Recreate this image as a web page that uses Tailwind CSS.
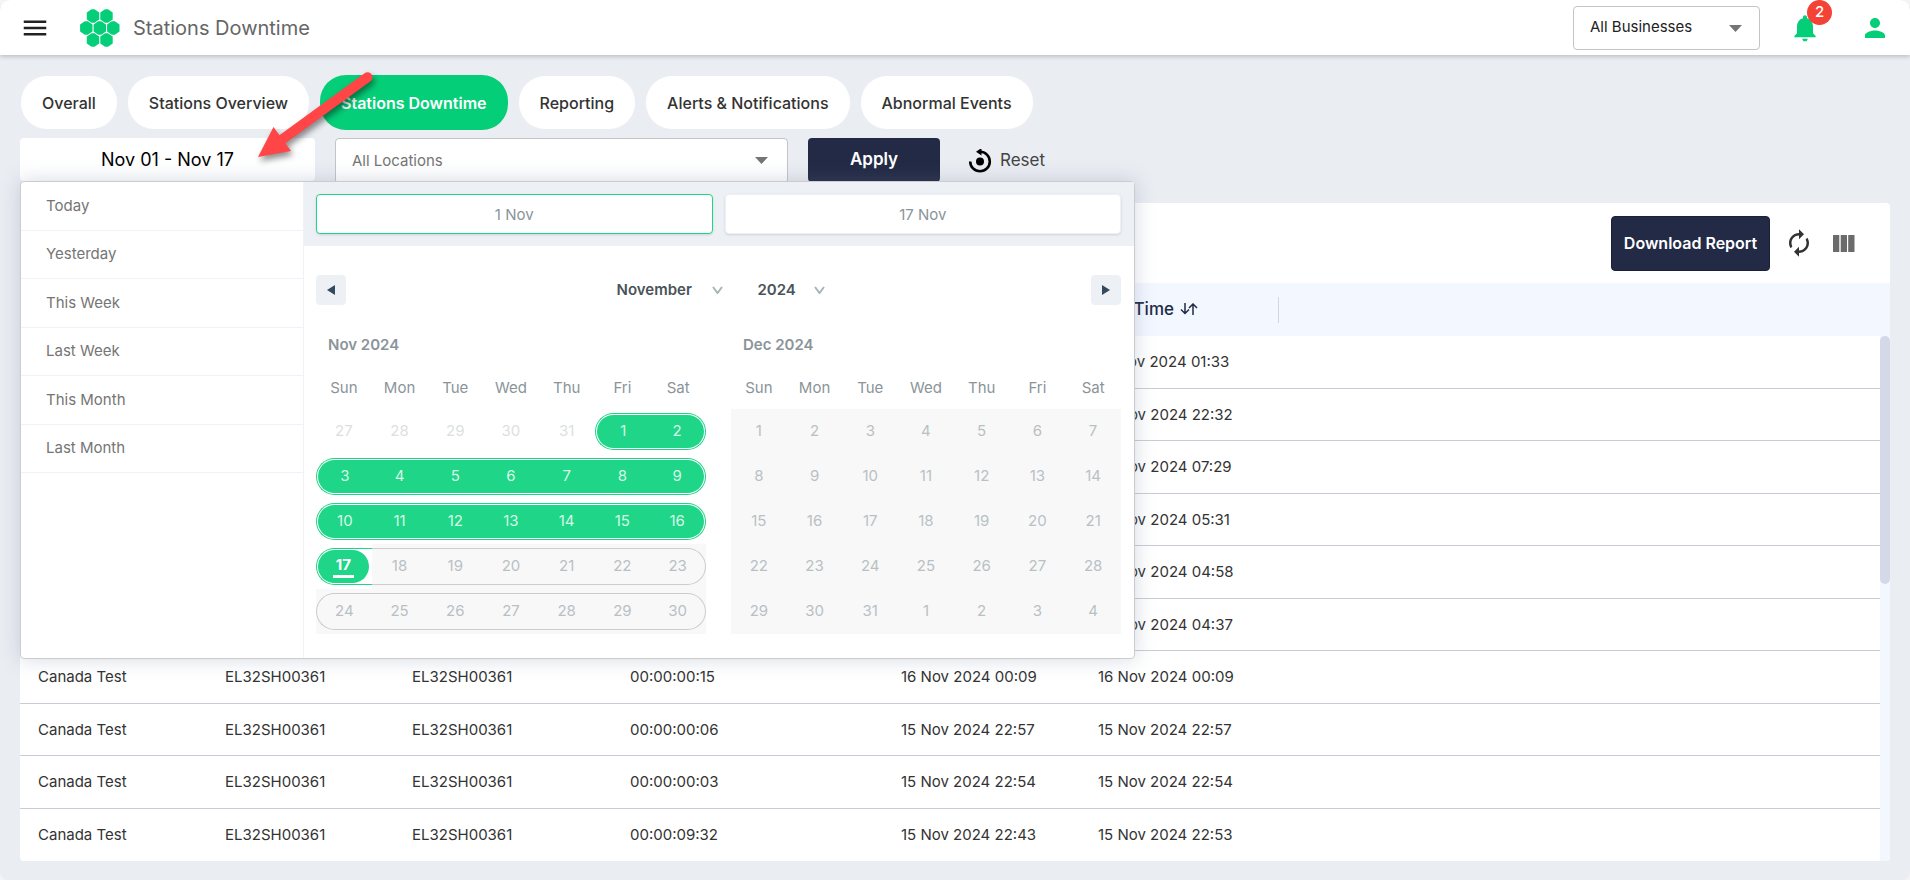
<!DOCTYPE html>
<html lang="en">
<head>
    <meta charset="UTF-8">
    <meta name="viewport" content="width=device-width, initial-scale=1.0">
    <title>Stations Downtime</title>
    <script src="https://cdn.jsdelivr.net/npm/@tailwindcss/browser@4"></script>
</head>
<body class="bg-[#f4f4f4] font-['Inter',sans-serif] text-[#333]">
    <div class="relative min-h-screen rounded-[10px] bg-[#eaedf2] pb-5 overflow-hidden">

        <!-- Top bar -->
        <header class="relative flex h-[55px] items-center bg-white pl-5 pr-5 shadow-[0_2px_4px_rgba(0,0,0,0.18)]">
            <button aria-label="Menu" class="text-[#222]">
                <svg class="size-[30px]" viewBox="0 0 24 24" fill="currentColor"><path d="M3 18h18v-2H3v2zm0-5h18v-2H3v2zm0-7v2h18V6H3z"/></svg>
            </button>
            <svg class="ml-[30px] h-[38px] w-10" viewBox="0 0 40 38" fill="#05ce78">
                <defs><path id="hex" d="M-1.500-6.700H1.500L6.200-3.600V3.600L1.500 6.700H-1.500L-6.200 3.600V-3.600Z"/></defs>
                <use href="#hex" x="13" y="7"/>
                <use href="#hex" x="26.5" y="7"/>
                <use href="#hex" x="6.3" y="19"/>
                <use href="#hex" x="19.8" y="19"/>
                <use href="#hex" x="33.3" y="19"/>
                <use href="#hex" x="13" y="31"/>
                <use href="#hex" x="26.5" y="31"/>
            </svg>
            <h1 class="ml-[13px] text-xl text-[#666]">Stations Downtime</h1>

            <div class="relative ml-auto">
                <select aria-label="Business" class="h-11 w-[187px] appearance-none rounded border border-[#c4c4c4] bg-white px-4 text-[15px] text-[#222]">
                    <option>All Businesses</option>
                </select>
                <svg class="pointer-events-none absolute right-[18px] top-[19px] h-[7px] w-[13px]" viewBox="0 0 13 7" fill="#757575"><path d="M0 0h13L6.5 7z"/></svg>
            </div>
            <button aria-label="Notifications" class="relative ml-[29px] text-[#05ce78]">
                <svg class="size-8" viewBox="0 0 24 24" fill="currentColor"><path d="M12 22c1.1 0 2-.9 2-2h-4c0 1.1.9 2 2 2zm6-6v-5c0-3.07-1.63-5.64-4.5-6.32V4c0-.83-.67-1.5-1.5-1.5s-1.5.67-1.5 1.5v.68C7.64 5.36 6 7.92 6 11v5l-2 2v1h16v-1l-2-2z"/></svg>
                <span class="absolute -top-3 left-[18px] flex size-[25px] items-center justify-center rounded-full bg-[#f44336] text-[15px] font-medium text-white">2</span>
            </button>
            <button aria-label="Account" class="ml-[39px] text-[#05ce78]">
                <svg class="size-[30px]" viewBox="0 0 24 24" fill="currentColor"><path d="M12 12c2.21 0 4-1.79 4-4s-1.79-4-4-4-4 1.79-4 4 1.79 4 4 4zm0 2c-2.67 0-8 1.34-8 4v2h16v-2c0-2.66-5.33-4-8-4z"/></svg>
            </button>
        </header>

        <main class="px-5 pt-5">
            <nav class="flex items-center gap-[11px] pl-px text-base font-medium text-[#333]">
                <a href="#" class="flex h-[53px] items-center rounded-[26px] bg-white px-[21px]">Overall</a>
                <a href="#" class="flex h-[53px] items-center rounded-[26px] bg-white px-[21px]">Stations Overview</a>
                <a href="#" class="flex h-[55px] items-center rounded-[26px] bg-[#05ce78] px-[21px] font-semibold text-white">Stations Downtime</a>
                <a href="#" class="flex h-[53px] items-center rounded-[26px] bg-white px-[21px]">Reporting</a>
                <a href="#" class="flex h-[53px] items-center rounded-[26px] bg-white px-[21px]">Alerts &amp; Notifications</a>
                <a href="#" class="flex h-[53px] items-center rounded-[26px] bg-white px-[21px]">Abnormal Events</a>
            </nav>

            <!-- Filters -->
            <div class="mt-2 flex items-start gap-5">
                <div class="relative">
                    <button class="h-[43px] w-[295px] rounded bg-white text-lg text-black">Nov 01 - Nov 17</button>

                    <!-- Date range popover -->
                    <div class="absolute left-0 top-full z-10 flex h-[478px] w-[1115px] rounded border border-[#ccc] bg-white text-[15px] shadow-[0_0_20px_rgba(100,120,150,0.28)]">
                        <div class="w-[283px] shrink-0 border-r border-[#f1f2f8]">
                            <ul id="presets" class="grid h-[291px] grid-rows-6"></ul>
                        </div>
                        <div class="flex-1">
                            <div class="flex gap-3 bg-[#edf1f6] py-3 pl-3 pr-[13px]">
                                <input aria-label="From" readonly value="1 Nov" class="h-10 w-full rounded border border-[#1fd587] bg-white text-center text-[#8a9499] shadow-sm">
                                <input aria-label="To" readonly value="17 Nov" class="h-10 w-full rounded border border-[#edf0f4] bg-white text-center text-[#8a9499] shadow-sm">
                            </div>
                            <div class="flex items-center justify-between pl-3 pr-[13px] pt-[29px]">
                                <button aria-label="Previous month" class="flex size-[30px] items-center justify-center rounded bg-[#edf1f6]">
                                    <svg class="h-[10px] w-[8px]" viewBox="0 0 8 10" fill="#34495e"><path d="M8 0v10L0 5z"/></svg>
                                </button>
                                <div class="ml-1 flex gap-[35px] font-semibold text-[#4a5458]">
                                    <div class="relative">
                                        <select aria-label="Month" class="w-[106px] appearance-none bg-transparent"><option>November</option></select>
                                        <svg class="pointer-events-none absolute right-0 top-[7px] h-[8px] w-[11px]" viewBox="0 0 11 8" fill="none" stroke="#aab4b8" stroke-width="2"><path d="M1 1l4.500 6L10 1"/></svg>
                                    </div>
                                    <div class="relative">
                                        <select aria-label="Year" class="w-[67px] appearance-none bg-transparent"><option>2024</option></select>
                                        <svg class="pointer-events-none absolute right-0 top-[7px] h-[8px] w-[11px]" viewBox="0 0 11 8" fill="none" stroke="#aab4b8" stroke-width="2"><path d="M1 1l4.500 6L10 1"/></svg>
                                    </div>
                                </div>
                                <button aria-label="Next month" class="flex size-[30px] items-center justify-center rounded bg-[#edf1f6]">
                                    <svg class="h-[10px] w-[8px]" viewBox="0 0 8 10" fill="#34495e"><path d="M0 0v10l8-5z"/></svg>
                                </button>
                            </div>
                            <div id="months" class="flex gap-[25px] pl-3 pr-[13px] pt-7"></div>
                        </div>
                    </div>
                </div>

                <div class="relative">
                    <select aria-label="Location" class="h-[46px] w-[453px] appearance-none rounded border border-[#c4c4c4] bg-white px-4 text-[15px] text-[#757575]">
                        <option>All Locations</option>
                    </select>
                    <svg class="pointer-events-none absolute right-[20px] top-[19px] h-[7px] w-[13px]" viewBox="0 0 13 7" fill="#757575"><path d="M0 0h13L6.5 7z"/></svg>
                </div>
                <button class="h-11 w-[132px] rounded bg-[#232a45] text-[17px] font-semibold text-white">Apply</button>
                <button class="ml-2 flex h-[46px] items-center gap-2 text-[17px] text-[#444]">
                    <svg class="size-6" viewBox="0 0 24 24" fill="none" stroke="#000" stroke-width="2.600"><path d="M2.200 12.500a9.800 9.800 0 1 0 9.800-9.800"/><path d="M13.500-1v7.400L8 2.700z" fill="#000" stroke="none"/><circle cx="12" cy="12.500" r="4" fill="#000" stroke="none"/></svg>
                    Reset
                </button>
            </div>

            <!-- Downtime table -->
            <section class="mt-[19px] overflow-hidden rounded bg-white">
                <div class="flex h-20 items-center justify-end pr-[35px]">
                    <button class="h-[55px] w-[159px] rounded border border-[#1a2036] bg-[#232a45] text-base font-semibold text-white">Download Report</button>
                    <button aria-label="Refresh" class="ml-[14px] text-[#333]">
                        <svg class="size-[30px]" viewBox="0 0 24 24" fill="currentColor"><path d="M12 6v3l4-4-4-4v3c-4.420 0-8 3.580-8 8 0 1.570.46 3.030 1.240 4.260L6.700 14.800c-.45-.83-.7-1.790-.7-2.800 0-3.310 2.690-6 6-6zm6.760 1.740L17.300 9.200c.44.84.7 1.790.7 2.800 0 3.310-2.690 6-6 6v-3l-4 4 4 4v-3c4.420 0 8-3.580 8-8 0-1.570-.46-3.030-1.240-4.260z"/></svg>
                    </button>
                    <button aria-label="Columns" class="ml-[19px] text-[#6b6b6b]">
                        <svg class="h-[17px] w-[22px]" viewBox="0 0 22 17" fill="currentColor"><path d="M0 0h6.300v17H0zM7.700 0H14v17H7.700zM15.200 0h6.300v17h-6.300z"/></svg>
                    </button>
                </div>
                <div class="relative">
                    <table class="w-full table-fixed border-separate border-spacing-0 text-left text-[15px]">
                        <colgroup>
                            <col class="w-[187px]"><col class="w-[187px]"><col class="w-[218px]"><col class="w-[271px]"><col class="w-[197px]"><col class="w-[199px]"><col>
                        </colgroup>
                        <thead>
                            <tr id="headings" class="h-[53px] bg-[#f3f7ff] text-[17px] text-[#232a45]"></tr>
                        </thead>
                        <tbody id="rows"></tbody>
                    </table>
                    <div class="absolute bottom-0 right-0 top-[53px] w-[10px] bg-[#f3f7ff]">
                        <div class="h-[248px] rounded-full bg-[#d3d9e9]"></div>
                    </div>
                </div>
            </section>
        </main>

        <!-- Pointer to the date filter -->
        <svg class="pointer-events-none absolute left-[240px] top-[60px] z-20 h-[120px] w-[150px] drop-shadow-[2px_4px_3px_rgba(0,0,0,0.45)]" viewBox="0 0 150 120" fill="#ff4545">
            <path d="M127.500 17.200 42 79.500" stroke="#ff4545" stroke-width="10" stroke-linecap="round"/>
            <path d="M18 97 33.500 67 51 91z"/>
        </svg>
    </div>

    <script>
        const presets = ['Today', 'Yesterday', 'This Week', 'Last Week', 'This Month', 'Last Month'];
        const headings = ['', '', '', '', '', 'End Time'];
        const rows = [
            ['', '', '', '', '', '17 Nov 2024 01:33'],
            ['', '', '', '', '', '16 Nov 2024 22:32'],
            ['', '', '', '', '', '16 Nov 2024 07:29'],
            ['', '', '', '', '', '16 Nov 2024 05:31'],
            ['', '', '', '', '', '16 Nov 2024 04:58'],
            ['', '', '', '', '', '16 Nov 2024 04:37'],
            ['Canada Test', 'EL32SH00361', 'EL32SH00361', '00:00:00:15', '16 Nov 2024 00:09', '16 Nov 2024 00:09'],
            ['Canada Test', 'EL32SH00361', 'EL32SH00361', '00:00:00:06', '15 Nov 2024 22:57', '15 Nov 2024 22:57'],
            ['Canada Test', 'EL32SH00361', 'EL32SH00361', '00:00:00:03', '15 Nov 2024 22:54', '15 Nov 2024 22:54'],
            ['Canada Test', 'EL32SH00361', 'EL32SH00361', '00:00:09:32', '15 Nov 2024 22:43', '15 Nov 2024 22:53']
        ];
        const weekdays = ['Sun', 'Mon', 'Tue', 'Wed', 'Thu', 'Fri', 'Sat'];

        document.getElementById('presets').innerHTML = presets.map(name =>
            `<li class="border-b border-[#f1f2f8]"><button class="h-full w-full pl-[25px] text-left text-[#757575]">${name}</button></li>`
        ).join('');

        const sortIcon = '<svg class="mb-0.5 ml-[6px] h-[12px] w-[18px]" viewBox="0 0 18 12" fill="none" stroke="#232a45" stroke-width="1.500"><path d="M5 0v10.500M1 6.500l4 4 4-4M13 12V1.200M9 5l4-4 4 4"/></svg>';
        document.getElementById('headings').innerHTML = headings.map(name =>
            `<th class="p-0 font-medium"><div class="flex h-[26px] items-center border-r border-[#d3d6de] pl-[18px]"><span>${name}</span>${sortIcon}</div></th>`
        ).join('') + '<td></td>';

        document.getElementById('rows').innerHTML = rows.map((row, i) => {
            const line = i < rows.length - 1 ? 'border-[#c9ccd4]' : 'border-white';
            return '<tr>' + [...row, ''].map(text =>
                `<td class="border-b ${line} px-[18px] pt-[15px] pb-[14px] leading-normal whitespace-nowrap">${text || '&nbsp;'}</td>`
            ).join('') + '</tr>';
        }).join('');

        // kind: prev = day of previous month, range = selected, end = last selected day, off = disabled
        function dayCell(day, kind, col, outlined, start) {
            let td = 'h-[45px] p-0';
            let btn = 'flex h-[37px] w-full items-center justify-center';
            if (kind === 'prev') btn += ' text-[#dcdfe1]';
            if (kind === 'off') { td += ' bg-[#f8f8f8]'; btn += ' text-[#b9c0c4]'; }
            if (kind === 'off' && outlined) btn += ' border-y border-[#ccc]';
            if (kind === 'range') btn += ' border-y border-[#1fd587] bg-[#1fd587] bg-clip-content py-px text-[#d6f8e8]';
            if (kind === 'end') btn += ' border-y border-[#1fd587] font-bold text-white';
            if (outlined && (col === 0 || start)) btn += kind === 'range' ? ' rounded-l-full border-l pl-px' : ' rounded-l-full border-l';
            if (outlined && col === 6) btn += kind === 'range' ? ' rounded-r-full border-r pr-px' : ' rounded-r-full border-r';
            const label = kind === 'end'
                ? `<span class="mr-[3px] ml-px flex h-[33px] w-full items-center justify-center rounded-full bg-[#1fd587]"><span class="border-b-3 border-white px-[3px] leading-5">${day}</span></span>`
                : day;
            return `<td class="${td}"><button class="${btn}">${label}</button></td>`;
        }

        function month(title, first, last, prevDays, outlined, kindOf) {
            const days = [...prevDays.map(d => [d, 'prev'])];
            for (let d = first; d <= last; d++) days.push([d, kindOf(d)]);
            for (let d = 1; days.length < 35; d++) days.push([d, 'off']);
            let body = '';
            for (let w = 0; w < 5; w++) {
                body += '<tr>' + days.slice(w * 7, w * 7 + 7).map(([d, kind], col) =>
                    dayCell(d, kind, col, outlined && kind !== 'prev', kind === 'range' && d === 1)).join('') + '</tr>';
            }
            return `<div class="flex-1">
                <h2 class="pl-3 leading-6 font-semibold text-[#8a9499]">${title}</h2>
                <table class="mt-[11px] w-full table-fixed border-separate border-spacing-0 text-center">
                    <thead><tr>${weekdays.map(n => `<th class="h-[41px] p-0 font-normal text-[#8a9499]">${n}</th>`).join('')}</tr></thead>
                    <tbody>${body}</tbody>
                </table>
            </div>`;
        }

        document.getElementById('months').innerHTML =
            month('Nov 2024', 1, 30, [27, 28, 29, 30, 31], true, d => d < 17 ? 'range' : d === 17 ? 'end' : 'off') +
            month('Dec 2024', 1, 31, [], false, () => 'off');
    </script>
</body>
</html>
